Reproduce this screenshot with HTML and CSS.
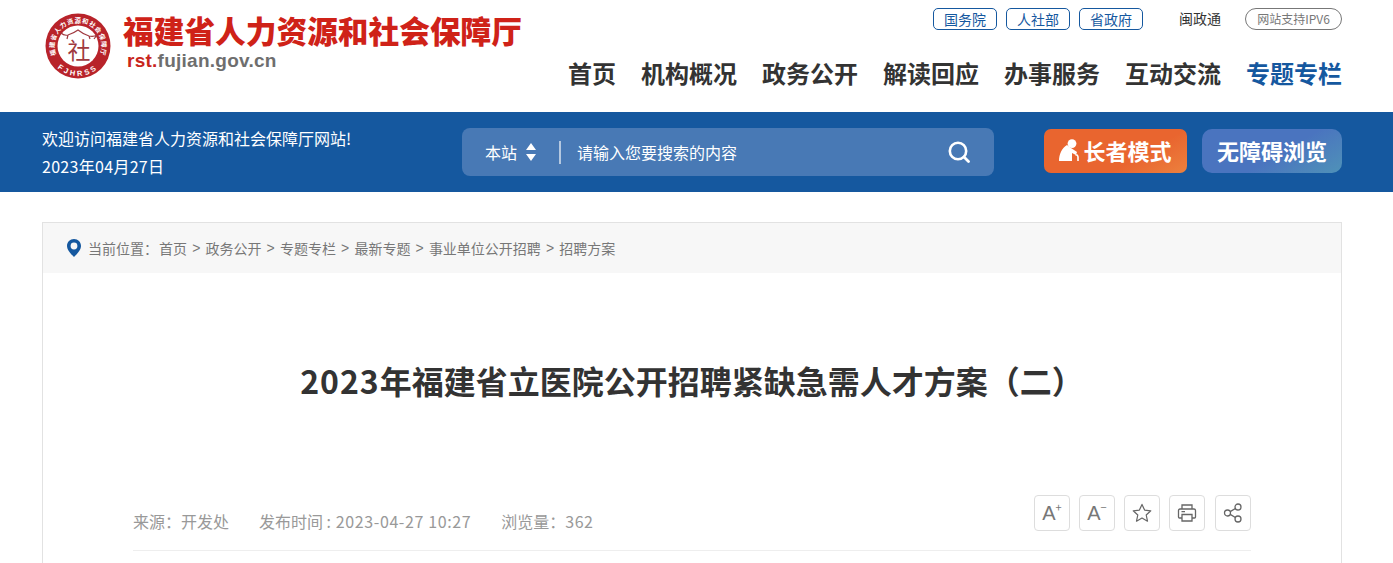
FILE: index.html
```html
<!DOCTYPE html>
<html lang="zh-CN">
<head>
    <meta charset="UTF-8">
    <meta name="viewport" content="width=device-width, initial-scale=1.0">
    <title>2023年福建省立医院公开招聘紧缺急需人才方案（二）</title>
    <link rel="stylesheet" href="styles.css">
</head>
<body>
    <header class="header">
        <div class="logo">
            <svg class="logo-mark" width="66" height="66" viewBox="0 0 66 66">
                <defs>
                    <path id="logo-arc" d="M12 44 A23.6 23.6 0 1 1 54 44"/>
                    <path id="logo-arc-low" d="M5.2 44.3 A30 30 0 0 0 60.8 44.3"/>
                </defs>
                <circle cx="33" cy="33" r="32.5" fill="#b8232a"/>
                <circle cx="33" cy="33" r="20.5" fill="#fff"/>
                <text class="logo-arc-text"><textPath href="#logo-arc" startOffset="50%" text-anchor="middle">福建省人力资源和社会保障厅</textPath></text>
                <text class="logo-en"><textPath href="#logo-arc-low" startOffset="50%" text-anchor="middle">FJHRSS</textPath></text>
                <path d="M16 20 Q19 23 23 22 Q29 20 33 17 Q38 21 44 23 Q49 24 52 22 L49 26 M23 22 L22 26 M44 23 L45 26" fill="none" stroke="#a03a40" stroke-width="1.2"/>
                <text class="logo-char" x="34" y="46" text-anchor="middle">社</text>
            </svg>
            <div class="logo-text">
                <div class="logo-name">福建省人力资源和社会保障厅</div>
                <div class="logo-url"><span class="logo-url-red">rst.</span>fujian.gov.cn</div>
            </div>
        </div>
        <div class="header-right">
            <div class="top-links">
                <a class="top-link">国务院</a>
                <a class="top-link">人社部</a>
                <a class="top-link">省政府</a>
                <span class="top-app">闽政通</span>
                <span class="top-ipv6">网站支持IPV6</span>
            </div>
            <nav class="nav">
                <a>首页</a>
                <a>机构概况</a>
                <a>政务公开</a>
                <a>解读回应</a>
                <a>办事服务</a>
                <a>互动交流</a>
                <a class="active">专题专栏</a>
            </nav>
        </div>
    </header>

    <div class="band">
        <div class="welcome">
            <div>欢迎访问福建省人力资源和社会保障厅网站!</div>
            <div class="welcome-date">2023年04月27日</div>
        </div>
        <div class="search">
            <span class="search-scope">本站</span>
            <svg class="search-arrows" width="10" height="18" viewBox="0 0 10 18">
                <path d="M5 0 L10 7 L0 7 Z M0 11 L10 11 L5 18 Z" fill="#fff"/>
            </svg>
            <span class="search-line"></span>
            <span class="search-text">请输入您要搜索的内容</span>
            <svg class="search-icon" width="22" height="22" viewBox="0 0 22 22">
                <circle cx="10" cy="10" r="8.2" fill="none" stroke="#fff" stroke-width="2.6"/>
                <path d="M16 16 L20.5 20.5" stroke="#fff" stroke-width="2.8" stroke-linecap="round"/>
            </svg>
        </div>
        <div class="band-btns">
            <a class="btn-elder">
                <svg width="20" height="22" viewBox="0 0 20 22">
                    <circle cx="13" cy="4.6" r="4.4" fill="#fff"/>
                    <path d="M8 6 C3 9 0 15 0 22 L13 22 L13 14 L17 16 L18 13 L12 9 Z" fill="#fff"/>
                    <path d="M16.5 16 L18 16 Q19 17 19 18 L19 22" fill="none" stroke="#fff" stroke-width="1.6"/>
                </svg>
                <span>长者模式</span>
            </a>
            <a class="btn-access">无障碍浏览</a>
        </div>
    </div>

    <main class="panel">
        <div class="crumb">
            <svg class="crumb-pin" width="14" height="18" viewBox="0 0 14 18">
                <path fill-rule="evenodd" d="M7 0 C3 0 0 3 0 7 C0 11 4 15 7 18 C10 15 14 11 14 7 C14 3 11 0 7 0 Z M7 3.6 A3.4 3.4 0 1 1 7 10.4 A3.4 3.4 0 1 1 7 3.6 Z" fill="#15589f"/>
            </svg>
            <span>当前位置：</span><a>首页</a><i>&gt;</i><a>政务公开</a><i>&gt;</i><a>专题专栏</a><i>&gt;</i><a>最新专题</a><i>&gt;</i><a>事业单位公开招聘</a><i>&gt;</i><a>招聘方案</a>
        </div>
        <div class="article">
            <h1 class="title"><span class="title-year">2023</span>年福建省立医院公开招聘紧缺急需人才方案（二）</h1>
            <div class="meta">
                <div class="meta-info">
                    <span>来源：开发处</span>
                    <span>发布时间 <span class="meta-num">: 2023-04-27 10:27</span></span>
                    <span>浏览量：<span class="meta-num">362</span></span>
                </div>
                <div class="tools">
                    <a class="tool"><span class="tool-a">A</span><sup>+</sup></a>
                    <a class="tool"><span class="tool-a">A</span><sup>−</sup></a>
                    <a class="tool">
                        <svg width="20" height="20" viewBox="0 0 20 20"><path d="M10 1.4 L12.6 7.1 L18.8 7.8 L14.2 12 L15.5 18.2 L10 15.1 L4.5 18.2 L5.8 12 L1.2 7.8 L7.4 7.1 Z" fill="none" stroke="#666" stroke-width="1.2" stroke-linejoin="round"/></svg>
                    </a>
                    <a class="tool">
                        <svg width="20" height="20" viewBox="0 0 20 20"><path d="M5 6 V2 H15 V6 M5 15 H2.5 Q1.5 15 1.5 14 V7.5 Q1.5 6 3 6 H17 Q18.5 6 18.5 7.5 V14 Q18.5 15 17.5 15 H15 M5 11.5 H15 V18 H5 Z M4.5 8.7 H8" fill="none" stroke="#666" stroke-width="1.3"/></svg>
                    </a>
                    <a class="tool">
                        <svg width="20" height="20" viewBox="0 0 20 20"><g fill="none" stroke="#666" stroke-width="1.3"><circle cx="4.5" cy="10" r="3"/><circle cx="15" cy="4" r="3"/><circle cx="15" cy="16" r="3"/><path d="M7.2 8.6 L12.4 5.5 M7.2 11.4 L12.4 14.5"/></g></svg>
                    </a>
                </div>
            </div>
        </div>
    </main>
</body>
</html>
```

FILE: styles.css
```css
* {
    box-sizing: border-box;
}
html, body {
    height: 100%;
    margin: 0;
    overflow: hidden;
}
body {
    font-family: "Noto Sans CJK SC", "Liberation Sans", sans-serif;
    color: #333;
    background: #fff;
}
a {
    text-decoration: none;
    color: inherit;
}

/* header */
.header {
    height: 112px;
    padding: 0 51px 0 45px;
    display: flex;
    justify-content: space-between;
}
.logo {
    display: flex;
    padding-top: 13px;
}
.logo-mark {
    flex: none;
}
.logo-text {
    margin-left: 12px;
}
.logo-name {
    font-size: 30.7px;
    font-weight: 900;
    line-height: 34px;
    color: #cf2218;
    white-space: nowrap;
}
.logo-url {
    margin: 2px 0 0 4px;
    font-family: "Liberation Sans", sans-serif;
    font-size: 19px;
    font-weight: bold;
    line-height: 24px;
    letter-spacing: 0.25px;
    color: #6e6e6e;
}
.logo-url-red {
    color: #c8261c;
}
.logo-arc-text {
    font-size: 6.4px;
    font-weight: bold;
    letter-spacing: 0.7px;
    fill: #fff;
}
.logo-en {
    font-family: "Liberation Sans", sans-serif;
    font-size: 7.5px;
    font-weight: bold;
    letter-spacing: 2.6px;
    fill: #fff;
}
.logo-char {
    font-size: 23px;
    fill: #a03a40;
}
.header-right {
    display: flex;
    flex-direction: column;
    align-items: flex-end;
    padding-top: 8px;
}
.top-links {
    display: flex;
    align-items: center;
    height: 22px;
    font-size: 14px;
}
.top-link {
    width: 64px;
    height: 22px;
    margin-right: 9px;
    line-height: 20px;
    text-align: center;
    color: #15589f;
    border: 1px solid #15589f;
    border-radius: 5px;
}
.top-app {
    margin: 0 24px 2px 27px;
    color: #333;
}
.top-ipv6 {
    width: 97px;
    height: 22px;
    line-height: 20px;
    font-size: 12px;
    text-align: center;
    color: #777;
    border: 1px solid #777;
    border-radius: 11px;
}
.nav {
    display: flex;
    gap: 25px;
    margin-top: 25px;
    font-size: 24px;
    font-weight: bold;
    line-height: 36px;
    color: #333;
}
.nav .active {
    color: #15589f;
}

/* blue band */
.band {
    height: 80px;
    padding: 0 51px 0 42px;
    display: flex;
    align-items: center;
    background: #15589f;
    color: #fff;
}
.welcome {
    width: 420px;
    font-size: 16px;
    line-height: 28px;
}
.welcome-date {
    letter-spacing: 0.3px;
}
.search {
    width: 532px;
    height: 48px;
    padding: 0 24px 0 23px;
    display: flex;
    align-items: center;
    background: #4879b5;
    border-radius: 8px;
    font-size: 16px;
}
.search-arrows {
    margin-left: 9px;
}
.search-line {
    width: 2px;
    height: 23px;
    margin: 0 16px 0 23px;
    background: #b4c8e0;
}
.search-text {
    flex: 1;
}
.band-btns {
    display: flex;
    gap: 15px;
    margin: 0 0 2px 50px;
}
.btn-elder, .btn-access {
    height: 44px;
    padding-bottom: 3px;
    display: flex;
    align-items: center;
    justify-content: center;
    font-size: 22px;
    font-weight: bold;
    border-radius: 7px;
}
.btn-elder {
    width: 143px;
    gap: 4px;
    background: linear-gradient(150deg, #e9652f 65%, #ec813e);
}
.btn-access {
    width: 140px;
    background: linear-gradient(150deg, #4a74bf 55%, #4f92b8);
    border-radius: 10px;
}

/* article panel */
.panel {
    width: 1300px;
    margin: 30px 0 0 42px;
    border: 1px solid #e2e2e2;
    height: 600px;
}
.crumb {
    height: 50px;
    padding: 0 0 1px 24px;
    display: flex;
    align-items: center;
    background: #f7f7f7;
    font-size: 14px;
    color: #777;
    white-space: nowrap;
}
.crumb-pin {
    margin-right: 7px;
}
.crumb span {
    margin-right: 1px;
}
.crumb i {
    margin: 0 5.15px;
    font-style: normal;
    font-family: "Liberation Sans", sans-serif;
}
.article {
    padding: 0 90px;
}
.title {
    margin: 0;
    padding-top: 83px;
    font-size: 32px;
    font-weight: bold;
    line-height: 48px;
    text-align: center;
    color: #333;
}
.title-year {
    letter-spacing: 1px;
}
.meta {
    margin-top: 91px;
    padding-bottom: 19px;
    display: flex;
    justify-content: space-between;
    align-items: flex-end;
    border-bottom: 1px solid #eee;
}
.meta-info {
    display: flex;
    gap: 30px;
    margin-bottom: 1px;
    font-size: 16px;
    line-height: 18px;
    color: #999;
}
.meta-num {
    letter-spacing: 0.6px;
}
.tools {
    display: flex;
    gap: 9px;
}
.tool {
    width: 36px;
    height: 36px;
    display: flex;
    align-items: center;
    justify-content: center;
    border: 1px solid #ddd;
    border-radius: 4px;
    color: #777;
}
.tool:last-child {
    margin-left: 1px;
}
.tool-a {
    font-family: "Liberation Sans", sans-serif;
    font-size: 20px;
    font-weight: normal;
}
.tool sup {
    font-size: 11px;
    line-height: 1;
    margin-bottom: 12px;
}
```
